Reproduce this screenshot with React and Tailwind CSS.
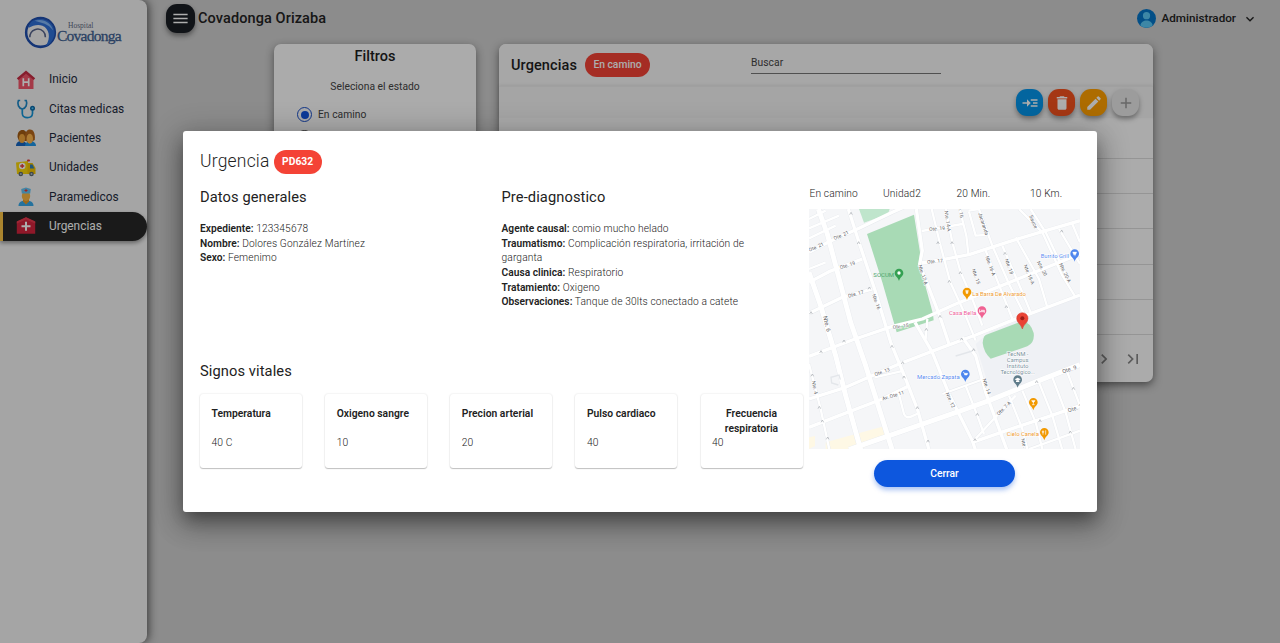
import React from "react";
import {
  MdMenu,
  MdReadMore,
  MdDelete,
  MdEdit,
  MdAdd,
  MdKeyboardArrowDown,
  MdChevronRight,
  MdLastPage,
} from "react-icons/md";

function HouseIcon() {
  return (
    <svg viewBox="0 0 20 20" className="size-5">
      <path d="M2.5 8 10 2l7.5 6v11h-15z" fill="#f2566b" />
      <path d="M10 .5.8 8.2l1.5 1.9L10 3.700l7.700 6.400 1.500-1.900z" fill="#c62c43" />
      <path d="M7.300 8.200v8M12.700 8.200v8M7.300 12.200h5.400" stroke="#fff" strokeWidth="1.700" />
    </svg>
  );
}

function StethoscopeIcon() {
  return (
    <svg viewBox="0 0 20 20" className="size-5" fill="none">
      <path d="M4.200 1.500H2.400C1 5 2.600 9.500 6.300 10c3.700-.5 5.300-5 3.900-8.500H8.500" stroke="#1e88c7" strokeWidth="1.700" />
      <path d="M6.300 10v4.500c0 5.400 9.800 5.600 10.200 0V11" stroke="#1595d8" strokeWidth="1.700" />
      <circle cx="16.500" cy="9.200" r="2.500" fill="#0b69a8" />
      <circle cx="16.500" cy="9.200" r="1" fill="#4fc3f7" />
    </svg>
  );
}

function PatientsIcon() {
  return (
    <svg viewBox="0 0 20 20" className="size-5">
      <path d="M0 18c0-3.500 2.500-5 5-5s6 1 6 5z" fill="#1565c0" />
      <path d="M9 18c0-3.500 3-5 5.500-5s5.500 1.500 5.500 5z" fill="#1e96e8" />
      <path d="M1.500 9C1.500 4 3.500 2 6.500 2S11 4 11 9l-1 4H3z" fill="#a35c14" />
      <path d="M8.800 11C8.500 4 11 1.500 14 1.500s5.500 3 4.800 10.500l-3 1.500h-5z" fill="#b5671c" />
      <ellipse cx="6" cy="10.500" rx="3" ry="4.500" fill="#f0a63c" />
      <ellipse cx="13.800" cy="10.800" rx="3.200" ry="5" fill="#ffb74d" />
    </svg>
  );
}

function AmbulanceIcon() {
  return (
    <svg viewBox="0 0 20 20" className="size-5">
      <path d="M0 4.500 12 3v13H1z" fill="#f9d60a" />
      <path d="M11.500 5h5l3 5v6h-8z" fill="#f2c200" />
      <path d="M14 6.500h2.500l1.800 4H14z" fill="#2f7fb5" />
      <rect x="11" y="1.500" width="3" height="2" rx="1" fill="#e53935" />
      <circle cx="6.200" cy="8" r="3.300" fill="#fff" />
      <path d="M6.200 6v4M4.200 8h4" stroke="#e53935" strokeWidth="1.300" />
      <circle cx="4.800" cy="16" r="2.300" fill="#5c6a73" />
      <circle cx="15.500" cy="16" r="2.300" fill="#5c6a73" />
      <circle cx="4.800" cy="16" r="1" fill="#b0bec5" />
      <circle cx="15.500" cy="16" r="1" fill="#b0bec5" />
    </svg>
  );
}

function NurseIcon() {
  return (
    <svg viewBox="0 0 20 20" className="size-5">
      <path d="M2.500 19c0-4 3-5.500 7.500-5.500s7.500 1.500 7.500 5.500z" fill="#37a9e8" />
      <path d="M7 12h6v2.500l-3 3-3-3z" fill="#e59a28" />
      <ellipse cx="10" cy="9" rx="4.200" ry="5" fill="#f9b642" />
      <path d="M5.200 2 10 .6 14.800 2l-.6 4.500H5.800z" fill="#64c3f2" />
      <path d="M10 2v3M8.500 3.500h3" stroke="#e53935" strokeWidth="1" />
    </svg>
  );
}

function EmergencyIcon() {
  return (
    <svg viewBox="0 0 20 20" className="size-5">
      <path d="M.8 5.500 10 1.300l9.200 4.200v12.200H.8z" fill="#d3243d" />
      <path d="M.8 5.500 10 1.300l9.200 4.200v2L10 3.500.8 7.500z" fill="#e83a4f" />
      <path d="M10 5.800v9M5.500 10.300h9" stroke="#fff" strokeWidth="2" />
    </svg>
  );
}

function Logo() {
  return (
    <div className="ml-[24px] mt-[15px] flex h-[35px] w-[100px] items-center">
      <svg viewBox="0 0 34 34" className="size-[33px] shrink-0">
        <circle cx="17" cy="17" r="14.800" fill="none" stroke="#1f4fae" strokeWidth="2.600" />
        <path d="M9 5C20 0 31 6 31.500 17c0 6-4 12-9 14C28 22 26 13 19 10 14 8 9 10 5 12c0-3 2-6 4-7z" fill="#2f6fd6" />
        <path d="M11 5c9-3 17 2 19 10C25 8 18 7 11 5z" fill="#7fb4f5" />
        <path d="M6 22c0-8 9-11 14-6 2 2 2 4 2 6" fill="none" stroke="#56648c" strokeWidth="1.600" />
      </svg>
      <div className="flex flex-col font-[Liberation_Serif,serif]">
        <span className="ml-[11px] text-[7.500px] leading-[6px] text-[#5d6a82]">Hospital</span>
        <span className="text-[15.500px] leading-[14px] tracking-[-0.750px] text-[#3d5f92] [-webkit-text-stroke:0.3px_#3d5f92]">Covadonga</span>
      </div>
    </div>
  );
}

const NAV = [
  ["Inicio", HouseIcon],
  ["Citas medicas", StethoscopeIcon],
  ["Pacientes", PatientsIcon],
  ["Unidades", AmbulanceIcon],
  ["Paramedicos", NurseIcon],
  ["Urgencias", EmergencyIcon],
];

function Sidebar() {
  return (
    <aside className="h-full w-[147px] shrink-0 rounded-r-[8px] bg-[#f4f4f4] shadow-[2px_0_8px_rgba(0,0,0,0.55)]">
      <Logo />
      <nav className="mt-[15px] flex flex-col">
        {NAV.map(([label, Icon]) => {
          const active = label === "Urgencias";
          return (
            <div
              key={label}
              className={
                active
                  ? "flex h-[29.330px] items-center rounded-r-full border-l-[3px] border-[#fcc544] bg-[#272727] pl-[13px] text-white shadow-[0_2px_4px_rgba(0,0,0,0.4)]"
                  : "flex h-[29.330px] items-center pl-[16px] text-[#1f2c40]"
              }
            >
              <Icon />
              <span className="ml-[13px] pt-[1px] text-[11.900px]">{label}</span>
            </div>
          );
        })}
      </nav>
    </aside>
  );
}

function Header() {
  return (
    <header className="flex h-[36px] items-center pl-[19px] pr-[22px]">
      <div className="flex size-[29px] items-center justify-center rounded-[11px] bg-[#1a1e24] text-white shadow-[0_3px_5px_rgba(0,0,0,0.4)]">
        <MdMenu size={19} />
      </div>
      <h1 className="ml-[3px] pt-[1px] text-[14.500px] font-medium tracking-[0.100px] text-[#222]">Covadonga Orizaba</h1>
      <div className="ml-auto flex items-center">
        <svg viewBox="0 0 20 20" className="size-[19px]">
          <circle cx="10" cy="10" r="10" fill="#0575c8" />
          <circle cx="10" cy="7" r="3.800" fill="#5ac8f5" />
          <path d="M3.500 17.300c1-7 12-7 13 0a10 10 0 0 1-13 0z" fill="#5ac8f5" />
        </svg>
        <span className="ml-[6px] pt-px text-[11.700px] font-medium text-[#222]">Administrador</span>
        <MdKeyboardArrowDown size={16} className="ml-[6px] mt-px text-[#222]" />
      </div>
    </header>
  );
}

function Filters() {
  return (
    <section className="h-[180px] w-[202px] rounded-[7px] bg-[#fcfcfc] px-[23px] shadow-[0_3px_8px_rgba(0,0,0,0.45)]">
      <h2 className="pt-[3px] text-center text-[14.500px] font-medium leading-[20px] text-[#1e1e1e]">Filtros</h2>
      <p className="mt-[12px] text-center text-[10.300px] leading-[16px] tracking-[0.020px] text-[#444]">Seleciona el estado</p>
      <div className="mt-[12px] flex items-center gap-[6px]">
        <span className="flex size-[15px] items-center justify-center rounded-full border-[1.500px] border-[#1a4fc8]">
          <span className="size-[8px] rounded-full bg-[#1557e0]" />
        </span>
        <span className="text-[10.300px] leading-[15px] tracking-[0.020px] text-[#444]">En camino</span>
      </div>
      <span className="mt-[8px] block size-[15px] rounded-full border-[1.500px] border-[#555]" />
    </section>
  );
}

function Panel() {
  const button = "flex size-[27px] items-center justify-center rounded-[11px] shadow-[0_3px_5px_rgba(0,0,0,0.35)]";
  return (
    <section className="flex h-[338px] w-[654px] flex-col rounded-[7px] bg-[#fcfcfc] shadow-[0_3px_8px_rgba(0,0,0,0.5)]">
      <div className="flex h-[42px] shrink-0 items-center rounded-t-[7px] bg-[#f6f6f6] pl-[12px]">
        <h2 className="pt-px text-[14.500px] font-medium tracking-[0.100px] text-[#1e1e1e]">Urgencias</h2>
        <span className="ml-[8px] flex h-[24px] w-[65px] items-center justify-center rounded-full bg-[#f44336] text-[10.300px] font-medium text-white">En camino</span>
        <div className="mb-[3px] ml-[101px] h-[21px] w-[190px] border-b border-[#777] text-[10.300px] leading-[19px] tracking-[0.050px] text-[#444]">Buscar</div>
      </div>
      <div className="flex h-[32px] shrink-0 items-center justify-end gap-[5px] border-t border-[#ececec] bg-[#f3f3f3] pr-[14px] shadow-[0_-1px_3px_rgba(0,0,0,0.08)]">
        <div className={button + " bg-[#0596ea] text-white"}><MdReadMore size={18} /></div>
        <div className={button + " bg-[#f4511e] text-white"}><MdDelete size={18} /></div>
        <div className={button + " bg-[#ffa000] text-white"}><MdEdit size={18} /></div>
        <div className={button + " bg-[#e6e6e6] text-[#999]"}><MdAdd size={18} /></div>
      </div>
      <div className="h-[41px] shrink-0 border-b border-[#dcdcdc]" />
      <div className="grid h-[176px] shrink-0 grid-rows-5">
        {[0, 1, 2, 3, 4].map((row) => (
          <div key={row} className="border-b border-[#dcdcdc]" />
        ))}
      </div>
      <div className="flex grow items-center justify-end gap-[9px] pr-[10px] text-[#888]">
        <MdChevronRight size={20} />
        <MdLastPage size={20} />
      </div>
    </section>
  );
}

const WIDE_ROADS = [
  "M28 0 55 75 125 340 170 470 255 740",
  "M0 190 35 290 80 440 110 560 160 740",
  "M120 722 450 607 540 575 690 515 813 467",
];

const MAIN_ROADS = [
  "M0 442 130 393 250 352 340 330 440 285 540 245 813 135",
  "M0 313 100 265 190 240M0 220 60 188 160 150",
  "M0 130 60 98 150 58 250 10 290-8",
  "M0 570 110 535 270 465 400 415 500 378 600 338 813 258",
  "M0 655 90 620 220 570 300 530",
  "M118 0 150 100 200 250 245 400 290 510 325 600 365 740",
  "M322 0 340 125 332 165 392 320 420 405",
  "M338 162 400 152 480 137 610 95 700 68 813 35",
  "M318 340 370 430 420 555 490 695 505 740",
  "M460 385 500 440 530 550 600 740",
  "M490 700 620 655 720 622 813 590",
];

const MINOR_ROADS = [
  "M368 0 392 100 424 220 470 320 500 395",
  "M410 0 430 100 455 190 490 270 520 350",
  "M452 0 472 80 478 135M338 66 460 45",
  "M478 5 510 0M480 8 500 80 530 78M510 0 550 110 600 225 650 325",
  "M530 125 565 215 610 330M580 110 640 250 665 310",
  "M620 85 690 210 715 295M630 0 700 70 760 200 800 265",
  "M665 0 710 70 770 195M750 60 813 165M790 45 813 100",
  "M0 58 90 20M0 88 80 50M0 30 50 5M0 180 50 160",
  "M355 330 350 390M197 505 285 485M400 555 525 510",
  "M268 548 285 615Q292 630 308 622L330 612",
  "M0 465 35 600 65 740M470 530 505 620 525 675",
  "M490 700 545 640 620 560M600 560 640 660 660 740",
  "M640 545 680 640 705 740M690 520 730 620 765 740",
  "M730 505 770 610 805 740M775 490 813 590M660 720 813 665",
];

const STREETS = [
  ["Ote. 21", 96, 78, -24], ["Ote. 21", 21, 113, -24], ["Ote. 19", 115, 168, -18],
  ["Ote. 17", 140, 254, -15], ["Ote. 19", 384, 58, -5], ["Ote. 17", 378, 156, -6],
  ["Nte. 14-A", 417, 36, 82], ["Nte. 16", 455, 2, 78], ["Jacaranda", 524, 44, 72],
  ["Sauce", 674, 38, 68], ["Nte. 17-A", 343, 197, 72], ["Nte. 16", 203, 278, 70],
  ["Nte. 15", 502, 202, 70], ["Nte. 16-A", 545, 170, 70], ["Nte. 18", 601, 172, 70],
  ["Nte. 18-A", 661, 196, 68], ["Nte. 20", 700, 178, 62], ["Nte. 20-A", 769, 191, 64],
  ["Ote. 15", 275, 351, -8], ["Ote. 13", 219, 488, -20], ["Av. Ote 11", 252, 559, -17],
  ["Nte. 4", 18, 535, 78], ["Nte. 12", 425, 573, 66], ["Nte. 14", 534, 532, 72],
  ["Ote. 7-A", 584, 597, -45], ["Nte.", 645, 702, 75],
];

const ARROWS = [
  [126, 14], [149, 102], [387, 102], [429, 102], [421, 218], [454, 192], [588, 134], [758, 67],
  [592, 294], [393, 323], [352, 362], [458, 391], [281, 462], [494, 423], [249, 413], [105, 397],
  [36, 429], [10, 499], [285, 505], [31, 596], [40, 637], [325, 597], [357, 697], [56, 688],
  [505, 617], [498, 693], [683, 519], [693, 636], [793, 539], [784, 670], [181, 238], [6, 312],
];

function Pin({ x, y, color, children }) {
  return (
    <g transform={`translate(${x} ${y})`}>
      <path d="M0 20C-3 8-13 6-13-4a13 13 0 0 1 26 0C13 6 3 8 0 20z" fill={color} />
      {children}
    </g>
  );
}

function StreetMap() {
  return (
    <svg viewBox="0 0 813 720" className="h-[240px] w-[271px] shrink-0" fontFamily="Roboto, sans-serif">
      <rect width="813" height="720" fill="#f5f6f8" />
      <path d="M540 370 813 262V468L690 515 550 568 500 405z" fill="#eff1f5" />
      <path d="M50 700 225 652 245 680 110 740H50zM0 685l18-4v30l-18 9z" fill="#fef8e5" />
      <g fill="none" stroke="#e6e9ed" strokeLinejoin="round">
        {MINOR_ROADS.map((d) => <path key={d} d={d} strokeWidth="9" />)}
        {MAIN_ROADS.map((d) => <path key={d} d={d} strokeWidth="12" />)}
        {WIDE_ROADS.map((d) => <path key={d} d={d} strokeWidth="17" />)}
      </g>
      <path d="M150 0h92l-5 15-72 26z" fill="#bfe5cc" />
      <path d="M174 75 315 17 333 130 330 160 372 315 374 334 263 370 220 220z" fill="#a8dab5" />
      <g fill="none" stroke="#fff" strokeLinejoin="round">
        {MINOR_ROADS.map((d) => <path key={d} d={d} strokeWidth="7" />)}
        {MAIN_ROADS.map((d) => <path key={d} d={d} strokeWidth="10" />)}
        {WIDE_ROADS.map((d) => <path key={d} d={d} strokeWidth="15" />)}
      </g>
      <path d="M530 378 640 336Q665 340 674 372 678 400 655 412L545 449Q524 430 521 402 522 384 530 378z" fill="#a8dab5" />
      <path d="M88 528 68 522 66 505 90 498 94 512M440 441l50-15" fill="none" stroke="#e3e6ea" strokeWidth="4" />
      {ARROWS.map(([x, y]) => (
        <path key={x + "-" + y} d={`M${x - 4} ${y + 3}L${x} ${y - 4}L${x + 4} ${y + 3}`} fill="none" stroke="#a4a9af" strokeWidth="2" />
      ))}
      <g fill="#5f6368" fontSize="15" textAnchor="middle" dominantBaseline="central" stroke="#fff" strokeWidth="3" paintOrder="stroke">
        {STREETS.map(([name, x, y, angle]) => (
          <text key={name + x} transform={`translate(${x} ${y}) rotate(${angle})`}>{name}</text>
        ))}
        <text fontSize="18" transform="translate(55 344) rotate(76)">Nte. 6</text>
        <text fontSize="17" transform="translate(781 481) rotate(-18)">Ote. 9</text>
        <text fontSize="17" transform="translate(798 598) rotate(-18)">Ote. 7</text>
      </g>
      <g fontSize="18" stroke="#fff" strokeWidth="3" paintOrder="stroke">
        <text x="193" y="204" fill="#4da56c" stroke="none" textLength="62">SOCUM</text>
        <text x="695" y="147" fill="#5b8df0" textLength="85">Burrito Grill</text>
        <text x="490" y="260" fill="#ee9b33" textLength="161">La Barra De Alvarado</text>
        <text x="420" y="317" fill="#ee5c98" textLength="82">Casa Bella</text>
        <text x="324" y="509" fill="#5b8df0" textLength="128">Mercado Zapata</text>
        <text x="593" y="682" fill="#ee9b33" textLength="97">Cielo Canela</text>
        <g fill="#78909c" textAnchor="middle">
          <text x="626" y="440" textLength="64">TecNM -</text>
          <text x="626" y="458" textLength="65">Campus</text>
          <text x="626" y="477" textLength="65">Instituto</text>
          <text x="626" y="495" textLength="103">Tecnológico...</text>
        </g>
      </g>
      <Pin x={270} y={196} color="#34a052"><circle cy="-4" r="5" fill="#fff" /></Pin>
      <Pin x={474} y={253} color="#f29900"><path d="M-5-9H5L3 1H-3z" fill="#fff" opacity=".85" /></Pin>
      <Pin x={519} y={309} color="#f06292"><path d="M-7-8V2M-7-1H7V2M-3-5H7v4" fill="none" stroke="#fff" strokeWidth="2.500" /></Pin>
      <Pin x={797} y={138} color="#4e86ee"><path d="M-6-9H6L3-1H-3zM-3 2H4" fill="#fff" stroke="#fff" /></Pin>
      <Pin x={469} y={499} color="#4e86ee"><path d="M-7-9h3l2 8H5L7-6H-3" fill="#fff" stroke="#fff" strokeWidth="1.500" /></Pin>
      <Pin x={626} y={516} color="#607d8b"><path d="M-9-5 0-10 9-5 0 0zM-5-1v4H5v-4" fill="#fff" /></Pin>
      <Pin x={673} y={584} color="#f29900"><path d="M-5-9H5L0-3zM0-3V3M-4 3H4" fill="#fff" stroke="#fff" strokeWidth="2" /></Pin>
      <Pin x={706} y={674} color="#f29900"><path d="M-4-10V3M4-10V3M-6-8v4h4v-4" fill="none" stroke="#fff" strokeWidth="2" /></Pin>
      <path d="M640 360C636 345 623 342 623 328a17 17 0 0 1 34 0c0 14-13 17-17 32z" fill="#ea4335" stroke="#d33b2f" strokeWidth="1.500" />
      <circle cx="640" cy="328" r="6" fill="#9c1c16" />
    </svg>
  );
}

function Field({ label, children }) {
  return (
    <p>
      <span className="font-semibold tracking-[0.020px] text-[#222]">{label}</span> {children}
    </p>
  );
}

const VITALS = [
  ["Temperatura", "40 C"],
  ["Oxigeno sangre", "10"],
  ["Precion arterial", "20"],
  ["Pulso cardiaco", "40"],
  ["Frecuencia respiratoria", "40"],
];

function Modal() {
  return (
    <div className="flex h-[381px] w-[914px] rounded-[3px] bg-white pl-[17px] shadow-[0_8px_14px_-4px_rgba(0,0,0,0.3),0_14px_24px_2px_rgba(0,0,0,0.22),0_5px_30px_5px_rgba(0,0,0,0.2)]">
      <div className="flex w-[602.500px] shrink-0 flex-col">
        <div className="mt-[17px] flex items-center">
          <h2 className="text-[17.500px] font-light leading-[24px] tracking-[0.200px] text-[#222]">Urgencia</h2>
          <span className="ml-[4px] mt-[2px] flex h-[24px] w-[48px] items-center justify-center rounded-full bg-[#f44336] text-[10.300px] font-bold text-white">PD632</span>
        </div>
        <div className="mt-[13px] flex h-[174px]">
          <section className="w-[301.500px] shrink-0">
            <h3 className="text-[14.670px] leading-[20px] tracking-[0.100px] text-[#222]">Datos generales</h3>
            <div className="mt-[15px] text-[10.200px] font-light leading-[14.670px] tracking-[0.130px] text-[#222]">
              <Field label="Expediente:">123345678</Field>
              <Field label="Nombre:">Dolores González Martínez</Field>
              <Field label="Sexo:">Femenimo</Field>
            </div>
          </section>
          <section className="w-[250px]">
            <h3 className="text-[14.670px] leading-[20px] tracking-[0.100px] text-[#222]">Pre-diagnostico</h3>
            <div className="mt-[15px] text-[10.200px] font-light leading-[14.670px] tracking-[0.130px] text-[#222]">
              <Field label="Agente causal:">comio mucho helado</Field>
              <Field label="Traumatismo:">Complicación respiratoria, irritación de<br />garganta</Field>
              <Field label="Causa clinica:">Respiratorio</Field>
              <Field label="Tratamiento:">Oxigeno</Field>
              <Field label="Observaciones:">Tanque de 30lts conectado a catete</Field>
            </div>
          </section>
        </div>
        <h3 className="text-[14.670px] leading-[20px] tracking-[0.100px] text-[#222]">Signos vitales</h3>
        <div className="mt-[13px] flex justify-between">
          {VITALS.map(([name, value]) => (
            <div key={name} className="h-[74px] w-[102px] rounded-[3px] px-[11.500px] pt-[13px] text-[10.300px] leading-[14.670px] text-[#222] shadow-[0_1px_1px_rgba(0,0,0,0.22),0_0_2px_rgba(0,0,0,0.14)]">
              <p className={name.startsWith("Frec") ? "text-center font-semibold tracking-[0.020px]" : "mb-[14.670px] whitespace-nowrap font-semibold tracking-[0.020px]"}>{name}</p>
              <p className="font-light tracking-[0.130px]">{value}</p>
            </div>
          ))}
        </div>
      </div>
      <div className="ml-[6.500px] flex w-[271px] flex-col items-center pt-[55px]">
        <div className="grid h-[23px] w-full shrink-0 grid-cols-[73.500px_73.500px_73.500px_1fr] pl-[0.500px] text-[10.200px] font-light leading-[16px] tracking-[0.130px] text-[#222]">
          <span>En camino</span>
          <span>Unidad2</span>
          <span>20 Min.</span>
          <span>10 Km.</span>
        </div>
        <StreetMap />
        <button className="mt-[11px] h-[27px] w-[141px] shrink-0 rounded-full bg-[#0d57de] text-[10.300px] font-medium text-white shadow-[0_3px_5px_rgba(13,87,222,0.35)]">Cerrar</button>
      </div>
    </div>
  );
}

export default function App() {
  return (
    <div className="relative h-[643px] w-[1280px] overflow-hidden bg-[#cecece] font-[Roboto,sans-serif]">
      <div className="flex h-full">
        <Sidebar />
        <main className="flex grow flex-col">
          <Header />
          <div className="mt-[8px] flex items-start gap-[23px] pl-[127px]">
            <Filters />
            <Panel />
          </div>
        </main>
      </div>
      <div className="absolute inset-0 flex justify-center bg-black/32 pt-[131px]">
        <Modal />
      </div>
    </div>
  );
}
